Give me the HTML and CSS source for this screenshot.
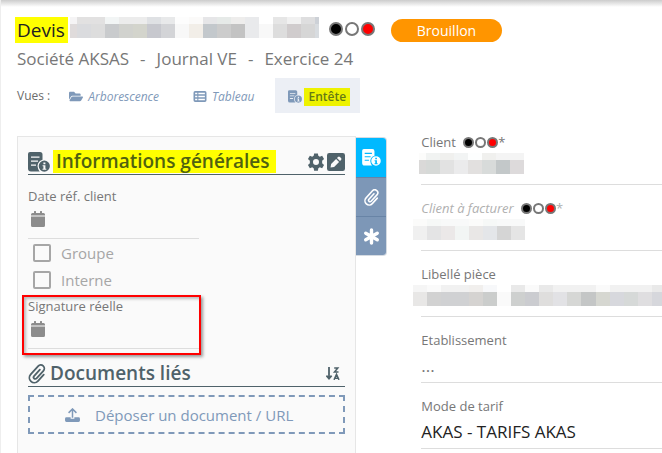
FILE: index.html
```html
<!DOCTYPE html>
<html lang="fr">
<head>
<meta charset="utf-8">
<meta name="viewport" content="width=device-width, initial-scale=1">
<title>Devis</title>
<link rel="stylesheet" href="styles.css">
</head>
<body>
<svg class="defs" aria-hidden="true">
  <symbol id="folder" viewBox="0 0 576 512"><path d="M572.7 292.1 500.300 416.200A64 64 0 0 1 445 448H45c-18.500 0-30-20-20.700-36.100l72.400-124.200A64 64 0 0 1 152 256h400c18.500 0 30 20 20.700 36.100zM152 224h328v-48c0-26.500-21.500-48-48-48H272l-64-64H48C21.500 64 0 85.500 0 112v278.100l69.100-118.400C86.200 242.300 118 224 152 224z"/></symbol>
  <symbol id="list" viewBox="0 0 24 24"><path fill-rule="evenodd" d="M3 2h18a3 3 0 0 1 3 3v14a3 3 0 0 1-3 3H3a3 3 0 0 1-3-3V5a3 3 0 0 1 3-3zM3 5v3h4V5zm6 0v3h12V5zM3 10.500v3h4v-3zm6 0v3h12v-3zM3 16v3h4v-3zm6 0v3h12v-3z"/></symbol>
  <symbol id="docinfo" viewBox="0 0 22 20"><path fill-rule="evenodd" d="M2 0h10a2.500 2.500 0 0 1 2.500 2.500v5.300a6.500 6.500 0 0 0-4.300 9.200c.3.900.8 1.700 1.500 2.500H3a3 3 0 0 1-3-3V2a2 2 0 0 1 2-2zM3 4.500v1.300h8.500V4.500zm0 4v1.300h7V8.500zm0 4v1.300h5v-1.300z"/><path fill-rule="evenodd" d="M16.300 8.500a5.600 5.600 0 1 1 0 11.200 5.600 5.600 0 0 1 0-11.200zm-.9 1.900v1.800h2v-1.800zm-.8 2.800v1.100h.8v2.400h-.9v1.100h3.800v-1.100h-.9v-3.500z"/></symbol>
  <symbol id="gear" viewBox="0 0 24 24"><path fill-rule="evenodd" d="M9.500.5h5l.6 3.200 2 1.200 3.100-1.100 2.500 4.300-2.500 2.200v3.400l2.500 2.200-2.500 4.300-3.100-1.100-2 1.200-.6 3.200h-5l-.6-3.200-2-1.200-3.100 1.100-2.500-4.300 2.500-2.200v-3.400L1.300 8.100l2.500-4.300 3.100 1.100 2-1.200zM12 8a4 4 0 1 0 0 8 4 4 0 0 0 0-8z"/></symbol>
  <symbol id="edit" viewBox="0 0 24 24"><path fill-rule="evenodd" d="M3 0h18a3 3 0 0 1 3 3v18a3 3 0 0 1-3 3H3a3 3 0 0 1-3-3V3a3 3 0 0 1 3-3zm2.500 14.500-.8 4.800 4.800-.8 6.600-6.600-4-4zM13.300 6.700l4 4 1.400-1.400a1.800 1.800 0 0 0 0-2.500l-1.500-1.500a1.800 1.800 0 0 0-2.500 0z"/></symbol>
  <symbol id="calendar" viewBox="0 0 14 16"><path d="M0 5.500h14v9a1.500 1.500 0 0 1-1.500 1.500h-11A1.500 1.500 0 0 1 0 14.500zM0 4.500v-1A1.500 1.500 0 0 1 1.500 2H3V.5a.5.5 0 0 1 .5-.5h1a.5.5 0 0 1 .5.5V2h4V.5a.5.5 0 0 1 .5-.5h1a.5.5 0 0 1 .5.5V2h1.500A1.500 1.500 0 0 1 14 3.500v1z"/></symbol>
  <symbol id="clip" viewBox="0 0 20 22"><path fill="none" stroke="currentColor" stroke-width="2" stroke-linecap="round" d="M13.200 6.200 6.700 13.300a1.900 1.900 0 0 0 2.800 2.600l7.600-8.300a3.900 3.900 0 0 0-5.800-5.300L3 11.500a5.400 5.400 0 0 0 8 7.400l6.500-7.100"/></symbol>
  <symbol id="star" viewBox="0 0 18 18"><path fill="none" stroke="currentColor" stroke-width="3.600" stroke-linecap="round" d="M9 2v14M2.900 5.500l12.200 7M15.100 5.500l-12.200 7"/></symbol>
  <symbol id="sort" viewBox="0 0 14 13"><path fill="none" stroke="currentColor" stroke-width="1.800" d="M3 0v11M.4 8.600 3 11.600l2.600-3"/><path fill="none" stroke="currentColor" stroke-width="1.500" d="M8.200 1h3.600L8.500 4.900h4M8 12.900l2.500-5.600 2.500 5.600M8.800 11.200h3.400"/></symbol>
  <symbol id="upload" viewBox="0 0 16 15"><path d="M1.500 10H6v1.500h4V10h4.500a1.500 1.500 0 0 1 1.500 1.500v2a1.500 1.500 0 0 1-1.500 1.500h-13A1.500 1.500 0 0 1 0 13.500v-2A1.500 1.500 0 0 1 1.500 10z"/><path fill="none" stroke="currentColor" stroke-width="1.600" d="M8 10.500V1.500M3.800 5.200 8 1l4.200 4.200"/></symbol>
</svg>

<div class="page">
  <header>
    <div class="title-row">
      <h1><mark>Devis</mark></h1>
      <svg class="mosaic title-mosaic" width="249" height="21" viewBox="0 0 249 21" shape-rendering="crispEdges" aria-hidden="true">
        <g><path fill="#f5f4f5" d="M0 0h7v7H0z"/><path fill="#e2e1e1" d="M7 0h28v7H7z"/><path fill="#f2f5f5" d="M35 0h14v7H35z"/><path fill="#ececec" d="M49 0h28v7H49z"/><path fill="#dfe1e4" d="M77 0h14v7H77z"/><path fill="#e8e9ea" d="M91 0h14v7H91z"/><path fill="#fdfdfd" d="M105 0h14v7h-14z"/><path fill="#fbfaf9" d="M119 0h14v7h-14z"/><path fill="#e6e6e8" d="M133 0h14v7h-14z"/><path fill="#e6eae8" d="M147 0h14v7h-14z"/><path fill="#eeedec" d="M161 0h14v7h-14z"/><path fill="#e9eaec" d="M175 0h14v21h-14z"/><path fill="#e6e6e6" d="M203 0h14v7h-14z"/><path fill="#f1f1f1" d="M217 0h14v7h-14z"/><path fill="#dededf" d="M231 0h14v7h-14z"/><path fill="#cdd1d7" d="M245 0h4v7h-4z"/></g>
        <g><path fill="#dfdbdb" d="M0 7h7v14H0z"/><path fill="#dadbde" d="M7 7h14v14H7z"/><path fill="#ddd" d="M21 7h14v14H21z"/><path fill="#c9cbcd" d="M35 7h14v14H35z"/><path fill="#d1d2ce" d="M49 7h14v14H49z"/><path fill="#d3d4cc" d="M63 7h14v14H63z"/><path fill="#c7c8ce" d="M77 7h14v14H77z"/><path fill="#d3d4d7" d="M91 7h14v14H91z"/><path fill="#f8f8f8" d="M105 7h14v14h-14zM189 7h14v14h-14z"/><path fill="#f2eee8" d="M119 7h14v14h-14z"/><path fill="#c3c8cc" d="M133 7h14v14h-14z"/><path fill="#ccc" d="M147 7h14v14h-14z"/><path fill="#c3c3c3" d="M161 7h14v14h-14z"/><path fill="#ddd" d="M203 7h14v14h-14z"/><path fill="#d0cccd" d="M217 7h14v14h-14z"/><path fill="#d6d6d6" d="M231 7h14v14h-14z"/><path fill="#d8dce0" d="M245 7h4v14h-4z"/></g>
      </svg>
      <span class="dots large"><i class="black"></i><i></i><i class="red"></i></span>
      <span class="badge">Brouillon</span>
    </div>
    <p class="subtitle"><span>Société AKSAS</span><span>-</span><span>Journal VE</span><span>-</span><span>Exercice 24</span></p>
    <nav class="views">
      <span class="views-label">Vues :</span>
      <a href="#arborescence"><svg class="i-view"><use href="#folder"/></svg>Arborescence</a>
      <a href="#tableau"><svg class="i-view"><use href="#list"/></svg>Tableau</a>
      <a href="#entete" class="active" aria-current="page"><svg class="i-view"><use href="#docinfo"/></svg><mark>Entête</mark></a>
    </nav>
  </header>

  <main>
    <div class="side">
      <section class="panel">
        <div class="heading">
          <svg class="i-head"><use href="#docinfo"/></svg>
          <h2><mark>Informations générales</mark></h2>
          <span class="actions">
            <button type="button" aria-label="Paramètres"><svg><use href="#gear"/></svg></button>
            <button type="button" aria-label="Modifier"><svg><use href="#edit"/></svg></button>
          </span>
        </div>
        <div class="date-field first">
          <label for="date-ref">Date réf. client</label>
          <div class="date-input"><svg><use href="#calendar"/></svg><input id="date-ref" type="text"></div>
        </div>
        <div class="checks">
          <label><input type="checkbox">Groupe</label>
          <label><input type="checkbox">Interne</label>
        </div>
        <div class="date-field outlined">
          <label for="date-sign">Signature réelle</label>
          <div class="date-input"><svg><use href="#calendar"/></svg><input id="date-sign" type="text"></div>
        </div>
        <div class="heading">
          <svg class="i-clip"><use href="#clip"/></svg>
          <h2>Documents liés</h2>
          <span class="actions sort"><button type="button" aria-label="Trier"><svg><use href="#sort"/></svg></button></span>
        </div>
        <button type="button" class="drop"><svg><use href="#upload"/></svg>Déposer un document / URL</button>
      </section>
      <div class="tabs">
        <button type="button" class="on" aria-label="Informations"><svg><use href="#docinfo"/></svg></button>
        <button type="button" aria-label="Documents"><svg><use href="#clip"/></svg></button>
        <button type="button" aria-label="Divers"><svg><use href="#star"/></svg></button>
      </div>
    </div>

    <section class="fields">
      <div class="field">
        <div class="label">Client <span class="dots"><i class="black"></i><i></i><i class="red"></i></span>*</div>
        <div class="value">
          <svg class="mosaic" width="111" height="21" shape-rendering="crispEdges" aria-hidden="true"><path fill="#fcfcfb" d="M6 0h7v7H6z"/><path fill="#f1f3f2" d="M13 0h14v7H13z"/><path fill="#f0f0ee" d="M27 0h14v7H27z"/><path fill="#f2f4f4" d="M41 0h14v7H41z"/><path fill="#fdfefe" d="M55 0h14v7H55z"/><path fill="#f0f0ee" d="M69 0h14v7H69z"/><path fill="#f4f4f4" d="M83 0h28v7H83z"/><path fill="#dad9d8" d="M6 7h7v14H6z"/><path fill="#d6d9d7" d="M13 7h14v14H13z"/><path fill="#e2e2e2" d="M27 7h14v14H27z"/><path fill="#ebebec" d="M41 7h14v14H41z"/><path fill="#e2e0df" d="M55 7h14v14H55z"/><path fill="#d8dbda" d="M69 7h14v14H69z"/><path fill="#c3c8c9" d="M83 7h14v14H83z"/><path fill="#dddadb" d="M97 7h14v14H97z"/></svg>
        </div>
      </div>
      <div class="field muted">
        <div class="label"><em>Client à facturer</em> <span class="dots"><i class="black"></i><i></i><i class="red"></i></span>*</div>
        <div class="value">
          <svg class="mosaic" width="112" height="21" shape-rendering="crispEdges" aria-hidden="true"><path fill="#fbfbfa" d="M0 0h14v7H0zM56 0h14v7H56z"/><path fill="#f6f8f7" d="M14 0h14v7H14zM70 0h14v7H70z"/><path fill="#f8f9f9" d="M28 0h28v7H28zM84 0h28v7H84z"/><path fill="#f0f0f0" d="M0 7h14v14H0z"/><path fill="#e4e4e5" d="M14 7h14v14H14z"/><path fill="#ebe8e8" d="M28 7h14v14H28z"/><path fill="#f2f5f4" d="M42 7h14v14H42z"/><path fill="#e9e7e6" d="M56 7h14v14H56z"/><path fill="#e4e6e9" d="M70 7h14v14H70z"/><path fill="#d5d5d5" d="M84 7h14v14H84z"/><path fill="#e5e5e5" d="M98 7h14v14H98z"/></svg>
        </div>
      </div>
      <div class="field">
        <div class="label">Libellé pièce</div>
        <div class="value">
          <svg class="mosaic wide" height="21" viewBox="0 0 248 21" preserveAspectRatio="xMinYMin slice" shape-rendering="crispEdges" aria-hidden="true"><path fill="#f5f5f5" d="M0 0h14v7H0z"/><path fill="#fafafa" d="M14 0h14v7H14zM112 0h14v7h-14zM182 0h14v7h-14z"/><path fill="#f1f1f1" d="M28 0h28v7H28zM140 0h42v7h-42zM196 0h42v7h-42z"/><path fill="#f1efed" d="M56 0h14v7H56z"/><path fill="#f7f8fa" d="M70 0h14v7H70z"/><path fill="#e9e9e9" d="M98 0h14v7H98zM126 0h14v7h-14zM238 0h10v7h-10z"/><path fill="#e8e7e6" d="M0 7h14v14H0z"/><path fill="#d2d2d2" d="M14 7h14v14H14z"/><path fill="#d0d1d3" d="M28 7h28v14H28z"/><path fill="#d5d3d1" d="M56 7h14v14H56z"/><path fill="#cbcdcc" d="M70 7h14v14H70z"/><path fill="#fafafa" d="M84 7h14v14H84z"/><path fill="#ced0cf" d="M98 7h14v14H98z"/><path fill="#cbccd0" d="M112 7h14v14h-14z"/><path fill="#dfdedd" d="M126 7h14v14h-14z"/><path fill="#e2e2e5" d="M140 7h14v14h-14z"/><path fill="#d6d7d5" d="M154 7h14v14h-14z"/><path fill="#c4c6c6" d="M168 7h14v14h-14z"/><path fill="#d6d7d1" d="M182 7h14v14h-14z"/><path fill="#d7d8dd" d="M196 7h14v14h-14z"/><path fill="#d6d9d8" d="M210 7h14v14h-14z"/><path fill="#dfdee0" d="M224 7h14v14h-14z"/><path fill="#d6d7dc" d="M238 7h10v14h-10z"/></svg>
        </div>
      </div>
      <div class="field">
        <label class="label" for="etab">Etablissement</label>
        <input class="value faint" id="etab" type="text" value="...">
      </div>
      <div class="field">
        <label class="label" for="tarif">Mode de tarif</label>
        <input class="value" id="tarif" type="text" value="AKAS - TARIFS AKAS">
      </div>
    </section>
  </main>
</div>
</body>
</html>
```
FILE: styles.css
```css
* { box-sizing: border-box; }

body {
  margin: 0;
  font-family: "Open Sans", "Noto Sans", sans-serif;
  font-size: 12px;
  color: #6c6c6c;
  background: #fff;
  overflow: hidden;
}

svg { fill: currentColor; flex: none; }
.defs { position: absolute; width: 0; height: 0; }
h1, h2, p { margin: 0; font-weight: 400; }
mark { background: #ff0; color: inherit; }

button {
  font: inherit;
  color: inherit;
  background: none;
  border: 0;
  padding: 0;
  cursor: pointer;
}

input {
  font: inherit;
  color: inherit;
  background: none;
  border: 0;
  padding: 0;
  min-width: 0;
  outline: 0;
}

.page {
  display: flex;
  flex-direction: column;
  min-height: 100vh;
  padding: 17px 0 0 16px;
  border-left: 1px solid #eee;
  background: linear-gradient(#ccc, #fff) top / 100% 7px no-repeat;
}

/* Header */
.title-row { display: flex; align-items: flex-start; height: 26px; }
h1 { font-size: 19px; line-height: 26px; color: #222; margin-left: -2px; }
h1 mark { display: block; padding: 0 3px 0 2px; }
.title-mosaic { margin-left: 2px; }

.dots { display: inline-flex; gap: 1px; }
.dots i {
  width: 11px;
  height: 11px;
  border: 2px solid #777;
  border-radius: 50%;
  background: #fff;
}
.dots .black { background: #000; }
.dots .red { background: #f00; }
.dots.large { gap: 2px; margin: 5px 16px 0 10px; }
.dots.large i { width: 14px; height: 14px; }

.badge {
  margin-top: 2px;
  padding: 0 26px;
  border-radius: 12px;
  background: #ff9500;
  color: #fff;
  font-size: 14px;
  line-height: 23px;
}

.subtitle {
  display: flex;
  gap: 11px;
  margin-top: 4px;
  font-size: 17px;
  line-height: 24px;
  color: #777;
}

.views { display: flex; align-items: center; margin-top: 7px; }
.views-label { margin-right: 6px; }
.views a {
  display: flex;
  align-items: center;
  gap: 5px;
  height: 35px;
  padding: 2px 13px 0;
  color: #7f99b9;
  font-style: italic;
  text-decoration: none;
}
.views a + a { margin-left: 8px; }
.views .active {
  padding: 2px 10px 0 13px;
  background: #eceff5;
  font-style: normal;
  font-weight: 600;
  gap: 2px;
}
.views .active mark { background: #eef200; color: #667a15; padding: 0 4px; line-height: 18px; }
.i-view { width: 14px; height: 13px; }

/* Two-column body */
main {
  flex: 1;
  display: grid;
  grid-template-columns: minmax(0, 20fr) minmax(0, 13fr);
  column-gap: 34px;
  margin-top: 6px;
}

.side { display: flex; align-items: stretch; padding-top: 17px; }
.panel {
  flex: 1;
  min-width: 0;
  padding: 12px 10px;
  border: 1px solid #e6e6e6;
  border-bottom: 0;
  background: #fafafa;
}

.heading {
  display: flex;
  align-items: center;
  height: 26px;
  border-bottom: 1px solid #4f626a;
  color: #4f626a;
}
.heading h2 { font-size: 19px; font-weight: 600; line-height: 23px; }
.heading mark { display: block; padding: 0 6px 0 3px; color: #4f6210; }
.i-head { width: 22px; height: 20px; margin-right: 3px; }
.i-clip { width: 18px; height: 20px; margin-right: 4px; }
.actions { display: flex; gap: 2px; margin-left: auto; }
.actions button { display: flex; }
.actions svg { width: 18px; height: 18px; }
.actions.sort { margin-right: 5px; }
.sort svg { width: 14px; height: 13px; }

.date-field { position: relative; width: 54%; margin-top: 4px; }
.date-field.first { margin-top: 12px; }
.date-field label, .label {
  display: block;
  height: 18px;
  font-size: 13px;
  line-height: 18px;
  color: #777;
}
.date-input {
  display: flex;
  align-items: flex-start;
  height: 34px;
  padding: 6px 0 0 3px;
  border-bottom: 1px solid #ddd;
}
.date-input svg { width: 14px; height: 16px; color: #8c8c8c; }
.date-input input { flex: 1; margin-left: 6px; }

.outlined::after {
  content: "";
  position: absolute;
  inset: -2px -2px -6px -6px;
  border: 2px solid #f00;
  box-shadow: 2px 2px 3px #999, inset 2px 2px 3px #bbb;
  pointer-events: none;
}

.checks { padding-left: 5px; }
.checks label {
  display: flex;
  align-items: center;
  gap: 10px;
  height: 27px;
  font-size: 15px;
  color: #a6a6a6;
}
.checks input {
  appearance: none;
  width: 18px;
  height: 18px;
  margin: 0;
  border: 2px solid #a6a6a6;
  border-radius: 2px;
}

.outlined + .heading { margin-top: 12px; }

.drop {
  display: flex;
  align-items: center;
  justify-content: center;
  gap: 15px;
  width: 100%;
  height: 39px;
  margin-top: 8px;
  padding-right: 15px;
  border: 2px dashed #7f99b9;
  color: #7f99b9;
  font-size: 15px;
}
.drop svg { width: 15px; height: 14px; }

.tabs {
  align-self: flex-start;
  width: 31px;
  margin-top: 1px;
  border: 1px solid #d5dbe2;
  border-left: 0;
  border-radius: 0 4px 4px 0;
  overflow: hidden;
}
.tabs button {
  display: flex;
  align-items: center;
  justify-content: center;
  width: 100%;
  height: 39px;
  background: #7d97b7;
  color: #fff;
}
.tabs button + button { border-top: 1px solid #6884a6; }
.tabs .on { background: #00b9ff; }
.tabs svg { width: 19px; height: 17px; }

/* Right-hand fields */
.field { padding-top: 14px; }
.fields .dots { margin-left: 4px; vertical-align: -1px; }
.muted .label { color: #b0b0b0; }
.value {
  display: block;
  width: 100%;
  height: 34px;
  border-bottom: 1px solid #ddd;
  color: #222;
  font-size: 17px;
}
.value.faint { color: #777; }
.value .mosaic { display: block; margin: 2px 0 0 -8px; }
.value .wide { width: calc(100% + 8px); }
.value:has(.mosaic) { display: flow-root; }
```
